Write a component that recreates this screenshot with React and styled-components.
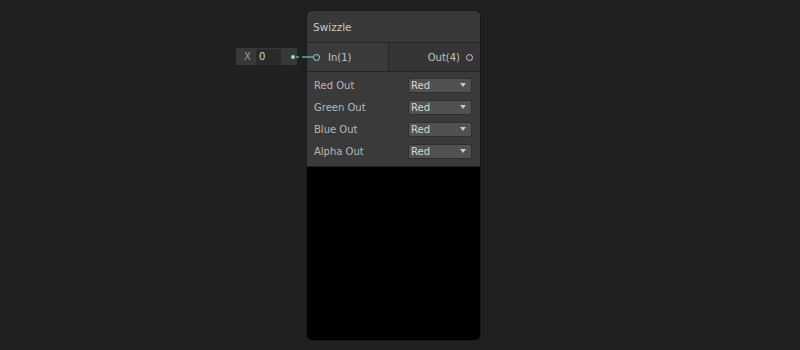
import styled, { createGlobalStyle } from 'styled-components'

const GlobalStyle = createGlobalStyle`
  html, body {
    margin: 0;
    padding: 0;
    background: #202020;
  }
  body {
    font-family: "DejaVu Sans", "Liberation Sans", sans-serif;
    font-size: 10px;
    color: #c4c4c4;
  }
`

// Free graph canvas
const Canvas = styled.div`
  position: relative;
  width: 800px;
  height: 350px;
  display: flex;
  align-items: flex-start;
  padding: 10px 0 0 236px;
  box-sizing: border-box;
`

// Inline value field attached to the input port
const Pill = styled.div`
  margin-top: 38px;
  width: 61px;
  height: 17px;
  background: #383838;
  display: flex;
  align-items: center;
  box-sizing: border-box;
  padding-left: 8px;
`

const PillLabel = styled.span`
  color: #9a9a9a;
  width: 12px;
`

const PillInput = styled.div`
  width: 25px;
  height: 16px;
  background: #2a2a2a;
  border-radius: 2px;
  color: #d2d2d2;
  display: flex;
  align-items: center;
  padding-left: 3px;
  box-sizing: border-box;
`

const Gap = styled.div`
  width: 9px;
`

// The node itself
const Node = styled.div`
  width: 175px;
  height: 331px;
  border: 1px solid #1a1a1a;
  border-radius: 6px;
  overflow: hidden;
  display: flex;
  flex-direction: column;
  box-sizing: border-box;
`

const Title = styled.div`
  height: 31px;
  background: #393939;
  border-bottom: 1px solid #262626;
  display: flex;
  align-items: center;
  padding-left: 6px;
  color: #c8c8c8;
  font-size: 10.5px;
`

const Ports = styled.div`
  height: 28px;
  display: flex;
  border-bottom: 1px solid #262626;
`

const PortSide = styled.div`
  box-sizing: border-box;
  flex: ${p => (p.$in ? '0 0 82px' : '1')};
  background: ${p => (p.$in ? '#3b3b3b' : '#353535')};
  border-right: ${p => (p.$in ? '1px solid #262626' : 'none')};
  display: flex;
  align-items: center;
  justify-content: ${p => (p.$in ? 'flex-start' : 'flex-end')};
  gap: ${p => (p.$in ? '8px' : '6px')};
  padding: ${p => (p.$in ? '0 0 0 6px' : '0 7px 0 0')};
`

const PortDot = styled.span`
  width: 5px;
  height: 5px;
  border-radius: 50%;
  border: 1.5px solid ${p => p.$color};
  flex: none;
`

const PortLabel = styled.span`
  color: #c2c2c2;
`

const Controls = styled.div`
  background: #3a3a3a;
  padding: 2px 8px 4px 7px;
  display: flex;
  flex-direction: column;
  border-bottom: 1px solid #222;
`

const Row = styled.div`
  height: 22px;
  display: flex;
  align-items: center;
  justify-content: space-between;
`

const RowLabel = styled.span`
  color: #b8b8b8;
`

const Select = styled.div`
  width: 64px;
  height: 15px;
  background: #515151;
  border: 1px solid #2e2e2e;
  border-radius: 2px;
  box-sizing: border-box;
  display: flex;
  align-items: center;
  justify-content: space-between;
  padding: 0 5px 0 2px;
  color: #d6d6d6;
`

const Arrow = styled.span`
  width: 0;
  height: 0;
  border-left: 3.5px solid transparent;
  border-right: 3.5px solid transparent;
  border-top: 4px solid #c8c8c8;
`

const Preview = styled.div`
  flex: 1;
  background: #000;
`

const Wire = styled.svg`
  position: absolute;
  left: 0;
  top: 0;
  pointer-events: none;
`

const rows = ['Red Out', 'Green Out', 'Blue Out', 'Alpha Out']

export default function App() {
  return (
    <>
      <GlobalStyle />
      <Canvas>
        <Pill>
          <PillLabel>X</PillLabel>
          <PillInput>0</PillInput>
        </Pill>
        <Gap />
        <Node>
          <Title>Swizzle</Title>
          <Ports>
            <PortSide $in>
              <PortDot $color="#8adfe2" />
              <PortLabel>In(1)</PortLabel>
            </PortSide>
            <PortSide>
              <PortLabel>Out(4)</PortLabel>
              <PortDot $color="#e2b6ee" />
            </PortSide>
          </Ports>
          <Controls>
            {rows.map(r => (
              <Row key={r}>
                <RowLabel>{r}</RowLabel>
                <Select>
                  Red
                  <Arrow />
                </Select>
              </Row>
            ))}
          </Controls>
          <Preview />
        </Node>
        <Wire width="800" height="350">
          <circle cx="293" cy="57" r="2" fill="#8adfe2" />
          <line x1="296" y1="57" x2="313" y2="57" stroke="#5fa8aa" strokeWidth="1.5" strokeDasharray="3 3 20" />
        </Wire>
      </Canvas>
    </>
  )
}
